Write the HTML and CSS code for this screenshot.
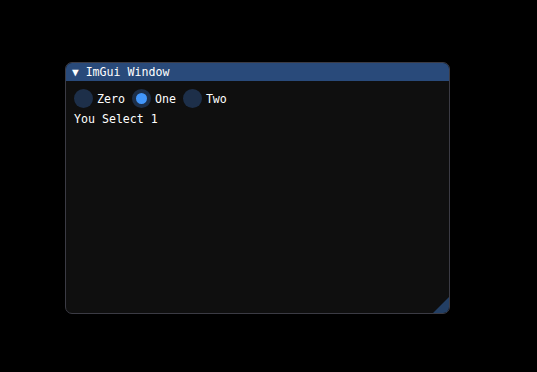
FILE: index.html
```html
<!DOCTYPE html>
<html lang="en">
<head>
  <meta charset="UTF-8" />
  <title>ImGui Window</title>
  <link rel="stylesheet" href="styles.css">
</head>
<body>
  <div class="window">
    <div class="window__title">
      <span class="window__arrow">▼</span>
      <span>ImGui Window</span>
    </div>
    <div class="window__body">
      <div class="radios">
        <label class="radio"><span class="radio__circle"></span>Zero</label>
        <label class="radio radio--on"><span class="radio__circle"></span>One</label>
        <label class="radio"><span class="radio__circle"></span>Two</label>
      </div>
      <div class="text">You Select 1</div>
    </div>
    <div class="window__grip"></div>
  </div>
</body>
</html>
```

FILE: styles.css
```css
html, body {
  height: 100%;
}

body {
  margin: 0;
  background: #000;
  font-family: 'DejaVu Sans Mono', 'Liberation Mono', monospace;
  font-size: 11.6px;
  color: #fff;
  padding: 62px 0 0 65px;
  box-sizing: border-box;
}

.window {
  position: relative;
  width: 385px;
  height: 252px;
  box-sizing: border-box;
  background: #0f0f0f;
  border: 1px solid #3b3b44;
  border-radius: 7px;
  overflow: hidden;
  display: flex;
  flex-direction: column;
}

.window__title {
  height: 18px;
  background: #294a7a;
  display: flex;
  align-items: center;
  gap: 7px;
  padding: 0 6px;
  line-height: 13px;
}

.window__arrow {
  font-size: 11px;
}

.window__body {
  padding: 8px 8px;
  display: flex;
  flex-direction: column;
  gap: 5px;
}

.radios {
  display: flex;
  gap: 7px;
}

.radio {
  display: flex;
  align-items: center;
  gap: 4px;
  height: 19px;
}

.radio__circle {
  width: 19px;
  height: 19px;
  border-radius: 50%;
  background: #1d2f49;
  box-sizing: border-box;
}

.radio--on .radio__circle {
  background: #4296fa;
  border: 4px solid #1d2f49;
}

.text {
  height: 13px;
  line-height: 13px;
}

.window__grip {
  position: absolute;
  right: 0;
  bottom: 0;
  width: 0;
  height: 0;
  border-left: 16px solid transparent;
  border-bottom: 16px solid #233f64;
}
```
